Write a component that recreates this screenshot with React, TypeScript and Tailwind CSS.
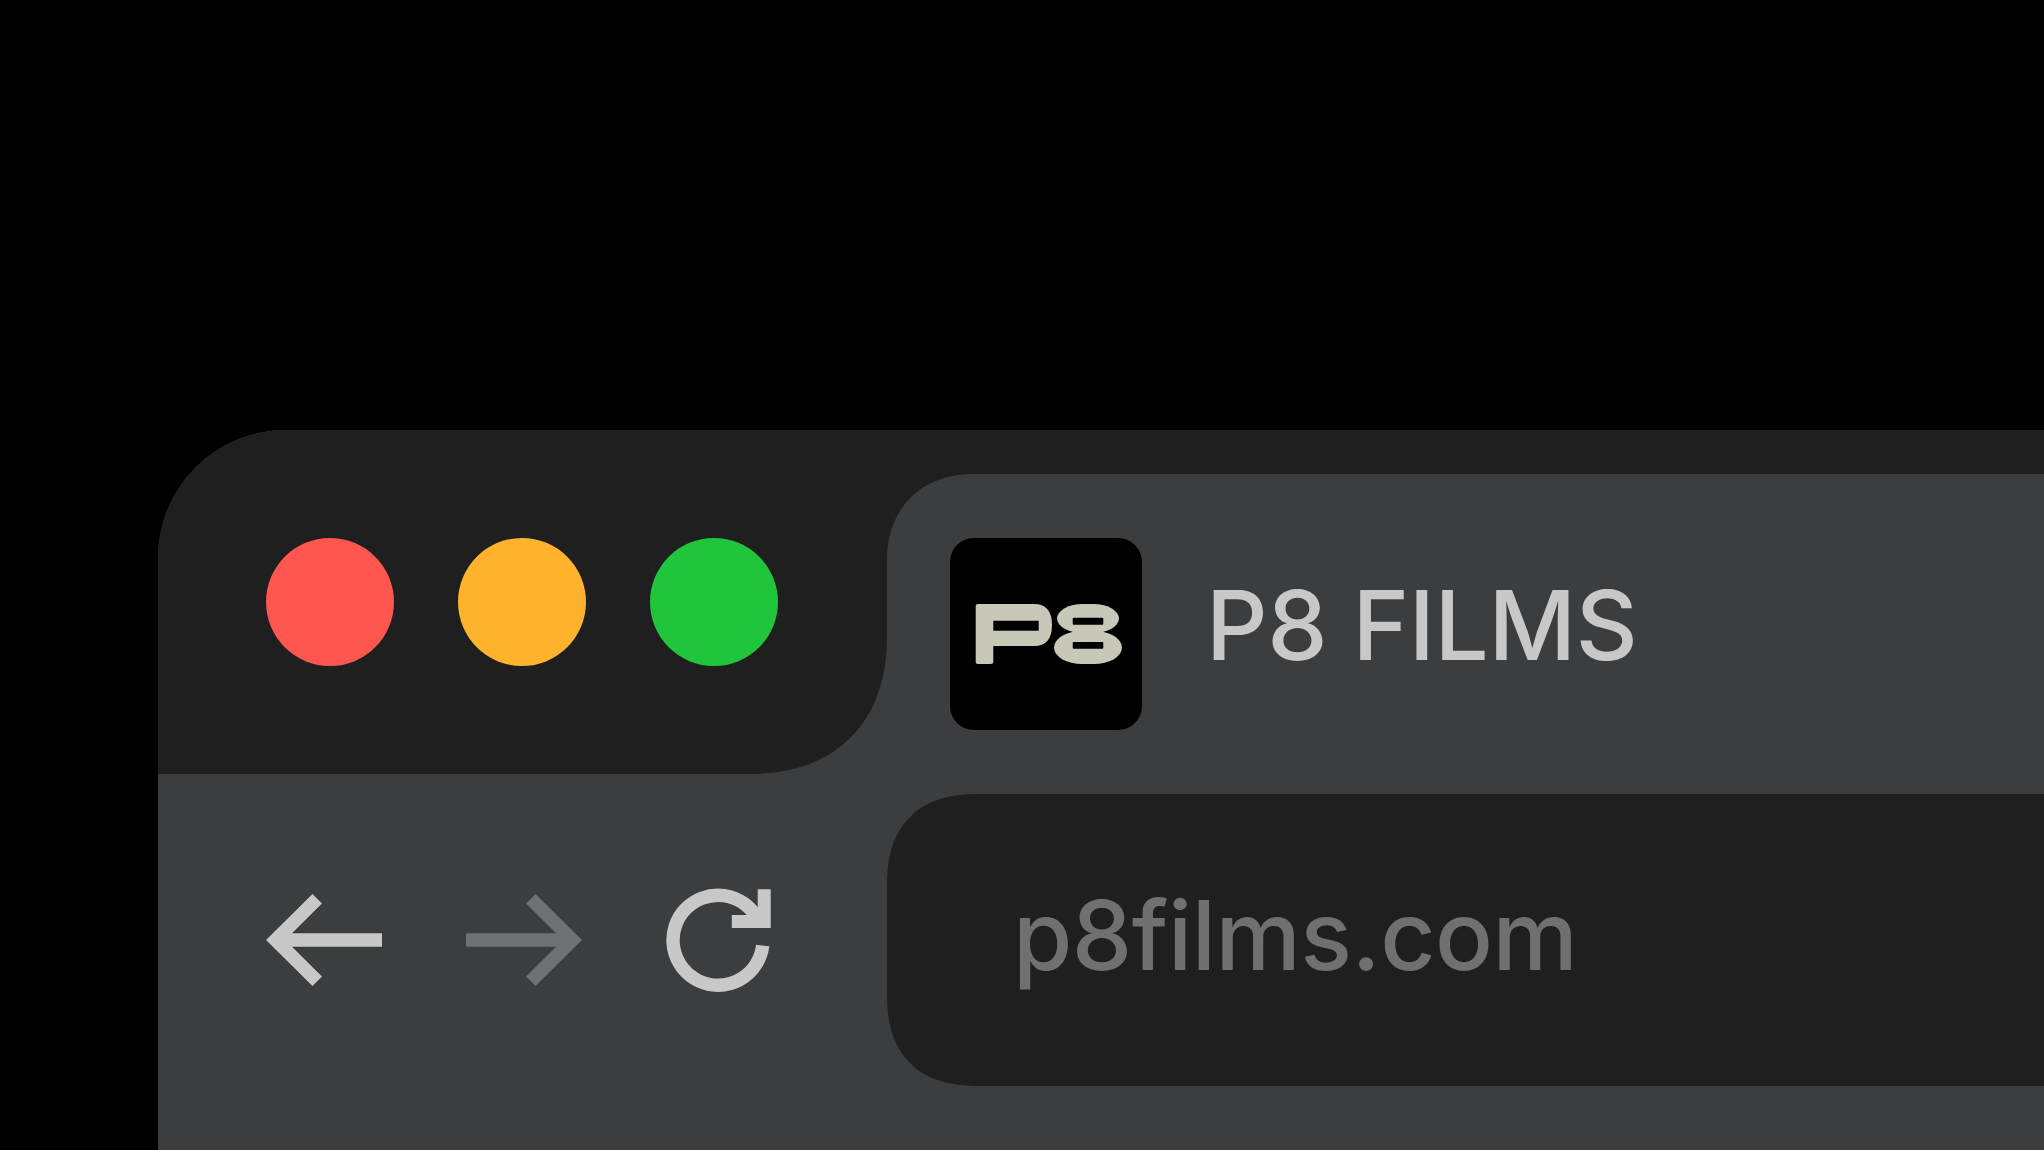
const font = { fontFamily: 'Inter, "Liberation Sans", sans-serif' };

function P8Logo() {
  return (
    <svg width="192" height="192" viewBox="0 0 192 192" className="shrink-0 rounded-[24px] bg-black">
      <path
        fill="#c9c7b8"
        fillRule="evenodd"
        d="M28 66H84Q102 66 102 87Q102 108 84 108H43.3V124Q43.3 126 41 126H28Q25.7 126 25.7 124V68Q25.7 66 28 66ZM43.3 82.7V92.7H88.7V82.7Z"
      />
      <rect x="107" y="66" width="62" height="29" rx="26" ry="14.5" fill="#c9c7b8" />
      <rect x="104" y="93" width="68" height="33" rx="28" ry="16.5" fill="#c9c7b8" />
      <rect x="122.7" y="79.7" width="30.6" height="7" rx="1" fill="#000" />
      <rect x="122.7" y="104" width="30.6" height="6.7" rx="1" fill="#000" />
    </svg>
  );
}

function BackArrow() {
  return (
    <svg width="116" height="92" viewBox="0 0 116 92" className="shrink-0">
      <path fill="#c8c8c8" d="M0 46L46.5 0L56 9.5L26 39.3H116V52.7H26L56 82.5L46.5 92Z" />
    </svg>
  );
}

function ForwardArrow() {
  return (
    <svg width="116" height="92" viewBox="0 0 116 92" className="shrink-0">
      <path fill="#707172" d="M116 46L69.5 0L60 9.5L90 39.3H0V52.7H90L60 82.5L69.5 92Z" />
    </svg>
  );
}

function ReloadIcon() {
  return (
    <svg width="106" height="104" viewBox="0 0 106 104" className="shrink-0">
      <path fill="none" stroke="#c8c8c8" strokeWidth="13.4" d="M96.7 57.5A45 45 0 1 1 91.7 31" />
      <path fill="#c8c8c8" d="M91.7 1.3H104.7V40H65.8V27H91.7Z" />
    </svg>
  );
}

export default function App() {
  return (
    <div className="h-[1150px] w-[2044px] overflow-hidden bg-black pt-[430px] pl-[158px]" style={font}>
      <div className="flex h-[720px] flex-col rounded-tl-[128px] bg-[#3b3d3e]">
        {/* title bar */}
        <div className="flex h-[344px] shrink-0">
          <div className="flex w-[729px] shrink-0 items-start gap-[64px] rounded-tl-[128px] rounded-br-[140px] bg-[#1f1f1f] pt-[108px] pl-[108px] [corner-bottom-right-shape:superellipse(1.2)]">
            <div className="h-[128px] w-[128px] rounded-full bg-[#ff5650]" />
            <div className="h-[128px] w-[128px] rounded-full bg-[#ffb32c]" />
            <div className="h-[128px] w-[128px] rounded-full bg-[#1fc63b]" />
          </div>
          <div className="flex-1 bg-[#1f1f1f] pt-[44px]">
            <div className="flex h-full items-start gap-[64px] rounded-tl-[88px] bg-[#3b3d3e] pt-[64px] pl-[63px] [corner-top-left-shape:superellipse(1.15)]">
              <P8Logo />
              <span className="mt-[27px] text-[96px] leading-[120px] font-medium tracking-[-0.35px] text-[#c8c8c8]">P8 FILMS</span>
            </div>
          </div>
        </div>

        {/* address row */}
        <div className="flex pt-[20px]">
          <div className="flex h-[292px] w-[729px] shrink-0 items-center pl-[108px]">
            <BackArrow />
            <div className="ml-[84px]">
              <ForwardArrow />
            </div>
            <div className="ml-[84px]">
              <ReloadIcon />
            </div>
          </div>
          <div className="flex h-[292px] flex-1 items-center rounded-l-[92px] bg-[#1f1f1f] pl-[126px] [corner-top-left-shape:superellipse(1.27)] [corner-bottom-left-shape:superellipse(1.27)]">
            <span className="mb-[10px] text-[96px] leading-[120px] font-medium tracking-[-0.47px] text-[#707070]">p8films.com</span>
          </div>
        </div>
      </div>
    </div>
  );
}
